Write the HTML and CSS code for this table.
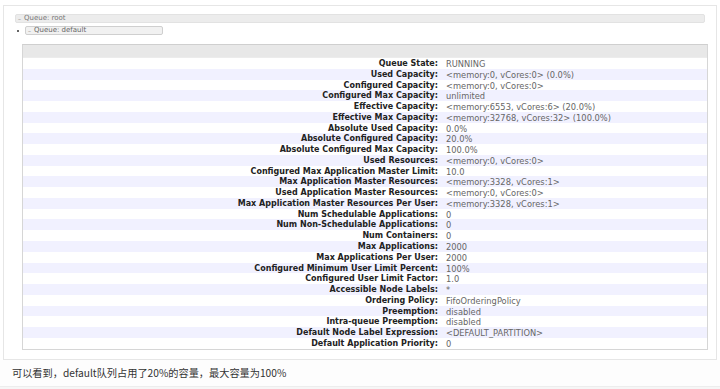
FILE: index.html
```html
<!DOCTYPE html>
<html>
<head>
<meta charset="utf-8">
<link rel="stylesheet" href="styles.css">
</head>
<body>
<div class="frame">
  <div class="qbar root"><span class="tog">–</span>Queue: root</div>
  <div class="qline">
    <span class="dot"></span>
    <div class="qbar def"><span class="tog">–</span>Queue: default</div>
  </div>
  <div class="info">
    <div class="head"></div>
    <div class="rows">
      <div class="row"><span class="k">Queue State:</span><span class="v">RUNNING</span></div>
      <div class="row alt"><span class="k">Used Capacity:</span><span class="v">&lt;memory:0, vCores:0&gt; (0.0%)</span></div>
      <div class="row"><span class="k">Configured Capacity:</span><span class="v">&lt;memory:0, vCores:0&gt;</span></div>
      <div class="row alt"><span class="k">Configured Max Capacity:</span><span class="v">unlimited</span></div>
      <div class="row"><span class="k">Effective Capacity:</span><span class="v">&lt;memory:6553, vCores:6&gt; (20.0%)</span></div>
      <div class="row alt"><span class="k">Effective Max Capacity:</span><span class="v">&lt;memory:32768, vCores:32&gt; (100.0%)</span></div>
      <div class="row"><span class="k">Absolute Used Capacity:</span><span class="v">0.0%</span></div>
      <div class="row alt"><span class="k">Absolute Configured Capacity:</span><span class="v">20.0%</span></div>
      <div class="row"><span class="k">Absolute Configured Max Capacity:</span><span class="v">100.0%</span></div>
      <div class="row alt"><span class="k">Used Resources:</span><span class="v">&lt;memory:0, vCores:0&gt;</span></div>
      <div class="row"><span class="k">Configured Max Application Master Limit:</span><span class="v">10.0</span></div>
      <div class="row alt"><span class="k">Max Application Master Resources:</span><span class="v">&lt;memory:3328, vCores:1&gt;</span></div>
      <div class="row"><span class="k">Used Application Master Resources:</span><span class="v">&lt;memory:0, vCores:0&gt;</span></div>
      <div class="row alt"><span class="k">Max Application Master Resources Per User:</span><span class="v">&lt;memory:3328, vCores:1&gt;</span></div>
      <div class="row"><span class="k">Num Schedulable Applications:</span><span class="v">0</span></div>
      <div class="row alt"><span class="k">Num Non-Schedulable Applications:</span><span class="v">0</span></div>
      <div class="row"><span class="k">Num Containers:</span><span class="v">0</span></div>
      <div class="row alt"><span class="k">Max Applications:</span><span class="v">2000</span></div>
      <div class="row"><span class="k">Max Applications Per User:</span><span class="v">2000</span></div>
      <div class="row alt"><span class="k">Configured Minimum User Limit Percent:</span><span class="v">100%</span></div>
      <div class="row"><span class="k">Configured User Limit Factor:</span><span class="v">1.0</span></div>
      <div class="row alt"><span class="k">Accessible Node Labels:</span><span class="v">*</span></div>
      <div class="row"><span class="k">Ordering Policy:</span><span class="v">FifoOrderingPolicy</span></div>
      <div class="row alt"><span class="k">Preemption:</span><span class="v">disabled</span></div>
      <div class="row"><span class="k">Intra-queue Preemption:</span><span class="v">disabled</span></div>
      <div class="row alt"><span class="k">Default Node Label Expression:</span><span class="v">&lt;DEFAULT_PARTITION&gt;</span></div>
      <div class="row"><span class="k">Default Application Priority:</span><span class="v">0</span></div>
    </div>
  </div>
</div>
<p class="caption">可以看到，default队列占用了20%的容量，最大容量为100%</p>
<div class="foot"></div>
</body>
</html>
```
FILE: styles.css
```css
html, body {
  margin: 0;
  padding: 0;
  background: #ffffff;
}
body {
  width: 720px;
  height: 389px;
  overflow: hidden;
  font-family: "DejaVu Sans", Verdana, sans-serif;
}
.frame {
  box-sizing: border-box;
  margin: 5px 3px 0 3px;
  height: 355px;
  border: 1px solid #e6e6e6;
  padding: 8px 11px 0 11px;
}
.qbar {
  box-sizing: border-box;
  height: 9px;
  background: #ececec;
  border: 1px solid #e2e2e2;
  border-radius: 2px;
  font-size: 7px;
  line-height: 7px;
  color: #777;
  display: flex;
  align-items: center;
}
.tog {
  display: inline-block;
  margin: 0 3px 0 2px;
  color: #888;
  font-size: 6px;
}
.qline {
  display: flex;
  align-items: center;
  margin-top: 3px;
}
.dot {
  width: 2px;
  height: 2px;
  background: #333;
  border-radius: 50%;
  margin: 0 6px 0 2px;
}
.qbar.def {
  width: 138px;
  height: 9px;
  background: #f1f1f1;
  border: 1px solid #cfcfcf;
  color: #666;
}
.info {
  margin: 9px -3px 0 7px;
  border: 1px solid #d6d6d6;
  border-top-color: #cfcfcf;
}
.head {
  height: 12px;
  background: #e8e8e8;
  border-bottom: 1px solid #ececec;
}
.row {
  display: grid;
  grid-template-columns: 415px 1fr;
  column-gap: 8px;
  height: 10.77px;
  line-height: 12px;
  overflow: hidden;
  background: #ffffff;
}
.row.alt {
  background: #f1f1ff;
}
.k {
  text-align: right;
  font-weight: bold;
  font-size: 8px;
  color: #222;
  white-space: nowrap;
}
.v {
  font-size: 8.3px;
  color: #666;
  white-space: nowrap;
}
.caption {
  margin: 0;
  height: 26px;
  line-height: 26px;
  padding-left: 12px;
  font-family: "Noto Sans CJK SC", "Noto Sans", sans-serif;
  font-size: 10.2px;
  color: #333;
  background: #fdfdfd;
  border-bottom: 1px solid #ededed;
}
.foot {
  height: 10px;
  background: #f6f6f6;
}
```
